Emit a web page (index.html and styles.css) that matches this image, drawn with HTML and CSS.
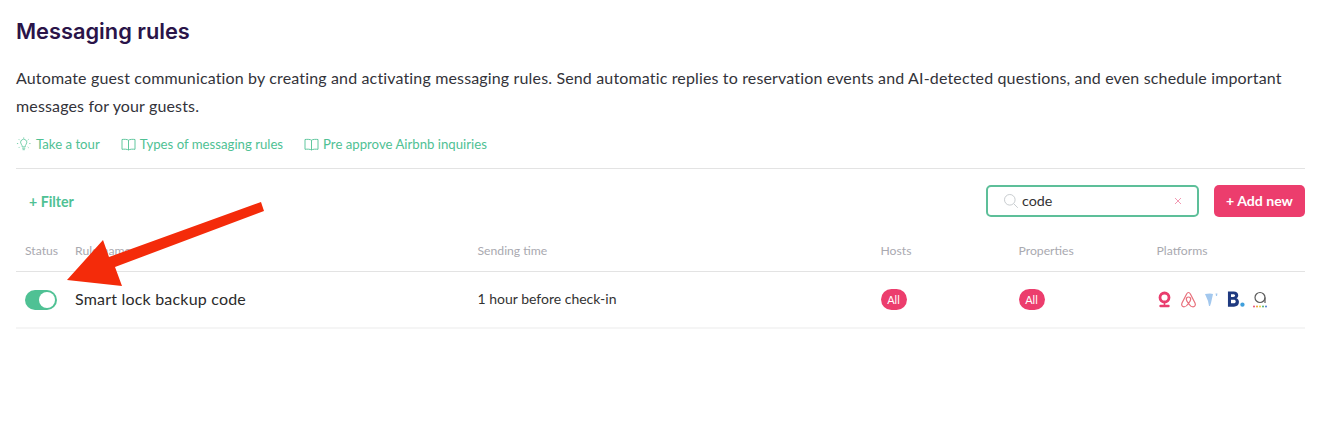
FILE: index.html
```html
<!DOCTYPE html>
<html lang="en">
  <head>
    <meta charset="UTF-8" />
    <title>Messaging rules</title>
    <link rel="stylesheet" href="styles.css">
  </head>
  <body>
    <div class="page">
      <h1 class="title">Messaging rules</h1>
      <p class="intro">Automate guest communication by creating and activating messaging rules. Send automatic replies to reservation events and AI-detected questions, and even schedule important messages for your guests.</p>
      <div class="links">
        <a class="link">
          <svg width="16" height="17" viewBox="0 0 17 17" fill="none" stroke="#4fc194" stroke-width="0.8"><path d="M5.600 8.200a3.300 3.300 0 1 1 5.200 0c-.7.900-1 1.500-1 2.800H6.600c0-1.300-.3-1.900-1-2.800zM6.600 12.500h3.200M7 14h2.400"/><path d="M8.200 1v1.200M3 3l.9.9M13.400 3l-.9.9M1 7.500h1.300M14.100 7.500h1.300M3 12l.9-.9M13.400 12l-.9-.9"/></svg>
          Take a tour
        </a>
        <a class="link">
          <svg width="15" height="13" viewBox="0 0 15 13" fill="none" stroke="#4fc194" stroke-width="0.9"><path d="M7.500 2.200C6.500 1.300 3 1.200 1 1.500v9.800c2-.3 5.500-.2 6.500.7 1-.9 4.500-1 6.500-.7V1.500c-2-.3-5.500-.2-6.500.7zM7.500 2.200V12"/></svg>
          Types of messaging rules
        </a>
        <a class="link">
          <svg width="15" height="13" viewBox="0 0 15 13" fill="none" stroke="#4fc194" stroke-width="0.9"><path d="M7.500 2.200C6.500 1.300 3 1.200 1 1.500v9.800c2-.3 5.500-.2 6.500.7 1-.9 4.500-1 6.500-.7V1.500c-2-.3-5.500-.2-6.500.7zM7.500 2.200V12"/></svg>
          Pre approve Airbnb inquiries
        </a>
      </div>

      <div class="toolbar">
        <span class="filter">+ Filter</span>
        <div class="toolbar-right">
          <div class="search">
            <svg width="16" height="16" viewBox="0 0 16 16" fill="none" stroke="#c9cdd0" stroke-width="1"><circle cx="6.800" cy="6.800" r="5.300"/><path d="M10.800 10.800l4 4"/></svg>
            <span class="search-text">code</span>
            <svg class="search-clear" width="8" height="8" viewBox="0 0 8 8" fill="none" stroke="#f29ab3" stroke-width="1"><path d="M1 1l6 6M7 1L1 7"/></svg>
          </div>
          <button class="add-btn">+ Add new</button>
        </div>
      </div>

      <div class="row head">
        <span class="col-status">Status</span>
        <span class="col-name">Rule name</span>
        <span class="col-time">Sending time</span>
        <span class="col-hosts">Hosts</span>
        <span class="col-props">Properties</span>
        <span class="col-plat">Platforms</span>
      </div>
      <div class="row item">
        <span class="col-status"><span class="toggle"><span class="knob"></span></span></span>
        <span class="col-name rule-name">Smart lock backup code</span>
        <span class="col-time item-text">1 hour before check-in</span>
        <span class="col-hosts"><span class="badge">All</span></span>
        <span class="col-props"><span class="badge">All</span></span>
        <span class="col-plat platforms">
          <svg width="15" height="18" viewBox="0 0 15 18" fill="none"><circle cx="7.500" cy="6.500" r="4.500" stroke="#e93d6e" stroke-width="2.800"/><path d="M7.500 11v3" stroke="#e93d6e" stroke-width="1.600"/><path d="M3.500 15h8" stroke="#e93d6e" stroke-width="2.400" stroke-linecap="round"/></svg>
          <svg width="17" height="17" viewBox="0 0 17 17" fill="none" stroke="#e8707c" stroke-width="1.200"><path d="M8.500 1.500c-1 0-1.500.8-2 1.800L2 12c-1 2.300.3 3.800 2 3.800 1.700 0 3.200-1.300 4.500-3.300 1.300 2 2.800 3.300 4.500 3.300 1.700 0 3-1.500 2-3.800l-4.500-8.700c-.5-1-1-1.800-2-1.800z"/><path d="M8.500 12.500C7 10.500 6.300 9.300 6.300 8.200a2.200 2.200 0 0 1 4.400 0c0 1.100-.7 2.300-2.200 4.300z"/></svg>
          <svg width="14" height="15" viewBox="0 0 14 15"><path d="M0 2l5-.6 3 .6-2 9-1 3h-1l-1-5z" fill="#a3c8ee"/><path d="M10.500 1.500h2l-.5 2.500h-1z" fill="#a3c8ee"/></svg>
          <svg class="logo-b" width="18" height="17" viewBox="0 0 20 19"><path d="M1 .5h6.500c3 0 5 1.500 5 4.200 0 1.600-.8 2.900-2 3.500 1.800.7 2.800 2.200 2.800 4.100 0 3.200-2.300 5.200-5.600 5.200H1zm3.400 3v3.200h2.500c1.300 0 2.100-.6 2.100-1.600s-.8-1.600-2.100-1.600zm0 6.300v3.900h3c1.400 0 2.300-.8 2.300-2s-.9-1.900-2.300-1.900z" fill="#1f3a80" fill-rule="evenodd"/><circle cx="17.200" cy="15.300" r="2.400" fill="#3f9fdc"/></svg>
          <svg class="logo-a" width="16" height="17" viewBox="0 0 16 17" fill="none"><circle cx="8" cy="6.500" r="5" stroke="#5a5a5a" stroke-width="1.200"/><path d="M13 6.500v5.500" stroke="#5a5a5a" stroke-width="1.200"/><circle cx="2" cy="15.500" r="1" fill="#e8507a"/><circle cx="5" cy="15.500" r="1" fill="#f0a030"/><circle cx="8" cy="15.500" r="1" fill="#e8d040"/><circle cx="11" cy="15.500" r="1" fill="#50b070"/><circle cx="14" cy="15.500" r="1" fill="#5080d0"/></svg>
        </span>
      </div>
    </div>

    <!-- annotation drawn over the screenshot -->
    <svg class="arrow" width="280" height="120" viewBox="0 0 280 120">
      <path d="M261 7L264 16 115 72 122 91 67 85 103 45 109 62z" fill="#f42b0a"/>
    </svg>
  </body>
</html>
```

FILE: styles.css
```css
html,
body {
  margin: 0;
  padding: 0;
  background: #fff;
}
body {
  font-family: "Lato", "Liberation Sans", sans-serif;
  color: #2b2b2b;
  overflow: hidden;
}
.page {
  padding: 18px 38px 0 16px;
}
.title {
  margin: 0;
  font-family: "Inter", sans-serif;
  font-size: 21.800px;
  line-height: 26px;
  font-weight: 600;
  color: #2a1449;
}
.intro {
  margin: 20px 0 0;
  font-size: 16px;
  letter-spacing: 0.150px;
  line-height: 28px;
  color: #33333a;
}
.links {
  display: flex;
  gap: 21px;
  margin-top: 16px;
  padding-bottom: 15px;
  border-bottom: 1px solid #e3e3e3;
}
.link {
  display: flex;
  align-items: center;
  gap: 4px;
  font-size: 13.200px;
  line-height: 17px;
  color: #4fc194;
}
.toolbar {
  display: flex;
  justify-content: space-between;
  align-items: center;
  margin-top: 16px;
}
.filter {
  padding-left: 13px;
  font-size: 14.200px;
  font-weight: 700;
  color: #4fc194;
}
.toolbar-right {
  display: flex;
  gap: 15px;
}
.search {
  display: flex;
  align-items: center;
  gap: 3px;
  box-sizing: border-box;
  width: 213px;
  height: 32px;
  padding: 0 15px;
  border: 2px solid #5dbf99;
  border-radius: 5px;
}
.search-text {
  padding-bottom: 2px;
  font-size: 14.300px;
  color: #333;
}
.search-clear {
  margin-left: auto;
}
.add-btn {
  width: 91px;
  height: 32px;
  padding: 0 0 2px;
  border: 0;
  border-radius: 5px;
  background: #ec3d6d;
  color: #fff;
  font-family: inherit;
  font-size: 14.100px;
  font-weight: 700;
}
.row {
  display: grid;
  grid-template-columns: 50px 402.500px 403px 138px 138px 1fr;
  align-items: center;
  padding-left: 9px;
}
.head {
  margin-top: 23px;
  height: 21px;
  padding-bottom: 10px;
  border-bottom: 1px solid #e3e3e3;
  font-size: 12.200px;
  color: #a9a9b0;
}
.item {
  height: 55px;
  border-bottom: 2px solid #f5f5f5;
  font-size: 14px;
  color: #333;
}
.rule-name {
  padding-bottom: 2px;
  font-size: 16px;
  letter-spacing: 0.200px;
  color: #2b2b2b;
}
.item-text {
  padding-bottom: 2px;
}
.toggle {
  display: flex;
  justify-content: flex-end;
  align-items: center;
  box-sizing: border-box;
  width: 32px;
  height: 20px;
  padding-right: 2px;
  border-radius: 10px;
  background: #4fc194;
}
.knob {
  width: 16px;
  height: 16px;
  border-radius: 50%;
  background: #fff;
}
.badge {
  display: inline-block;
  width: 26px;
  height: 21px;
  border-radius: 11px;
  background: #ec3d6d;
  color: #fff;
  font-size: 11px;
  line-height: 21px;
  text-align: center;
}
.platforms {
  display: flex;
  align-items: center;
  gap: 8px;
}
.logo-a {
  margin-left: -1px;
}
.arrow {
  position: absolute;
  top: 195px;
  left: 0;
}
```
